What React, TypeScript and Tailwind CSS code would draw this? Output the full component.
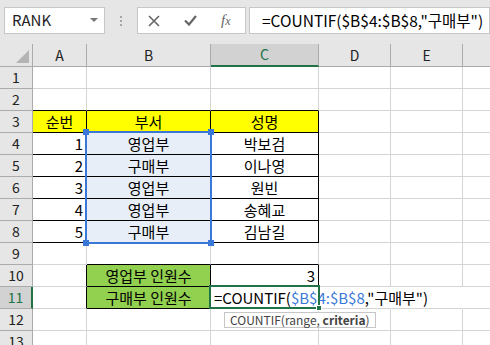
import type { ReactNode } from "react";

type Cell = {
  text?: ReactNode;
  align?: "l" | "c" | "r";
  fill?: "yellow" | "green" | "blue";
  br?: boolean; // black right edge
  bb?: boolean; // black bottom edge
  noR?: boolean; // gridline hidden under spilled text
};

const widths = ["w-[54px]", "w-[124px]", "w-[108px]", "w-[72px]", "w-[72px]", "w-[40px]"];
const letters = ["A", "B", "C", "D", "E", ""];

const Formula = () => (
  <>
    =COUNTIF(<span className="text-[#3a78d8]">$B$4:$B$8</span>,"구매부")
  </>
);

const rows: Record<number, Cell[]> = {
  2: [{ bb: true }, { bb: true }, { bb: true }],
  3: [
    { text: "순번", align: "c", fill: "yellow", br: true, bb: true },
    { text: "부서", align: "c", fill: "yellow", br: true, bb: true },
    { text: "성명", align: "c", fill: "yellow", br: true, bb: true },
  ],
  9: [{}, { bb: true }, { bb: true }],
  10: [
    { br: true },
    { text: "영업부 인원수", align: "c", fill: "green", br: true, bb: true },
    { text: "3", align: "r", br: true, bb: true },
  ],
  11: [
    { br: true },
    { text: "구매부 인원수", align: "c", fill: "green", br: true, bb: true },
    { text: <Formula />, align: "l", br: true, bb: true },
    { noR: true },
    { noR: true },
  ],
};

const people = [
  ["1", "영업부", "박보검"],
  ["2", "구매부", "이나영"],
  ["3", "영업부", "원빈"],
  ["4", "영업부", "송혜교"],
  ["5", "구매부", "김남길"],
];
people.forEach((p, i) => {
  rows[4 + i] = [
    { text: p[0], align: "r", br: true, bb: true },
    { text: p[1], align: "c", fill: "blue", br: true, bb: true },
    { text: p[2], align: "c", br: true, bb: true },
  ];
});

const fillClass = { yellow: "bg-[#ffff00]", green: "bg-[#92d050]", blue: "bg-[#e8eef8]" };
const alignClass = { l: "justify-start pl-[3px]", c: "justify-center", r: "justify-end pr-[3px]" };

function DataCell({ cell, w }: { cell: Cell; w: string }) {
  const right = cell.br ? "border-r-black" : cell.noR ? "border-r-transparent" : "border-r-[#d4d4d4]";
  const bottom = cell.bb ? "border-b-black" : "border-b-[#d4d4d4]";
  return (
    <div
      className={`${w} h-[22px] shrink-0 border-r border-b ${right} ${bottom} ${
        cell.fill ? fillClass[cell.fill] : ""
      } flex items-center ${alignClass[cell.align ?? "c"]} text-[15px] leading-none whitespace-nowrap relative z-10`}
    >
      {cell.text}
    </div>
  );
}

function Toolbar() {
  return (
    <div className="h-[44px] bg-[#e6e6e6] flex items-start pt-[7px] pl-[4px]">
      <div className="w-[101px] h-[27px] bg-white border border-[#c6c6c6] flex items-center pl-[7px] pr-[6px] justify-between">
        <span className="text-[15px] text-[#222]">RANK</span>
        <svg width="8" height="5" viewBox="0 0 8 5">
          <path d="M0 0h8L4 4z" fill="#777" />
        </svg>
      </div>
      <div className="w-[32px] h-[27px] flex flex-col items-center justify-center gap-[2px]">
        <span className="w-[2px] h-[2px] bg-[#a6a6a6]" />
        <span className="w-[2px] h-[2px] bg-[#a6a6a6]" />
        <span className="w-[2px] h-[2px] bg-[#a6a6a6]" />
      </div>
      <div className="w-[109px] h-[27px] bg-white border border-[#c6c6c6] flex items-center pl-[10px] gap-[24px]">
        <svg width="12" height="12" viewBox="0 0 12 12">
          <path d="M1 1l10 10M11 1L1 11" stroke="#666" strokeWidth="1.6" />
        </svg>
        <svg width="13" height="11" viewBox="0 0 13 11">
          <path d="M1 5.5l4 4L12 1" stroke="#666" strokeWidth="2.2" fill="none" />
        </svg>
        <span className="text-[15px] italic text-[#666] font-['Liberation_Serif',serif] leading-none">
          f<span className="text-[12px]">x</span>
        </span>
      </div>
      <div className="ml-[3px] flex-1 h-[27px] bg-white border border-[#c6c6c6] flex items-center pl-[12px] text-[15.5px] text-black whitespace-nowrap">
        =COUNTIF($B$4:$B$8,"구매부")
      </div>
    </div>
  );
}

export default function App() {
  return (
    <div className="w-[490px] h-[345px] overflow-hidden bg-white font-['Noto_Sans_CJK_KR',sans-serif] text-black">
      <Toolbar />
      <div className="relative">
        {/* column headers */}
        <div className="flex h-[23px]">
          <div className="w-[33px] shrink-0 border-r border-b border-[#ababab] bg-[#e6e6e6] flex items-end justify-end p-[3px]">
            <svg width="13" height="13" viewBox="0 0 13 13">
              <path d="M13 0V13H0z" fill="#b4b4b4" />
            </svg>
          </div>
          {letters.map((l, i) =>
            l === "C" ? (
              <div
                key={i}
                className={`${widths[i]} shrink-0 border-r border-[#ababab] border-b-2 border-b-[#217346] bg-[#d2d2d2] flex items-center justify-center text-[14px] text-[#217346]`}
              >
                {l}
              </div>
            ) : (
              <div
                key={i}
                className={`${widths[i]} shrink-0 border-r border-b border-[#ababab] bg-[#e6e6e6] flex items-center justify-center text-[14px] text-[#222]`}
              >
                {l}
              </div>
            )
          )}
        </div>
        {Array.from({ length: 13 }, (_, r) => r + 1).map((n) => {
          const cells = rows[n] ?? [];
          return (
            <div key={n} className="flex">
              {n === 11 ? (
                <div className="w-[33px] h-[22px] shrink-0 border-b border-[#ababab] border-r-2 border-r-[#217346] bg-[#d2d2d2] flex items-center justify-center text-[14px] text-[#217346]">
                  {n}
                </div>
              ) : (
                <div className="w-[33px] h-[22px] shrink-0 border-r border-b border-[#ababab] bg-[#e6e6e6] flex items-center justify-center text-[14px] text-[#222]">
                  {n}
                </div>
              )}
              {widths.map((w, i) => (
                <DataCell key={i} w={w} cell={cells[i] ?? {}} />
              ))}
            </div>
          );
        })}

        {/* reference highlight B4:B8 */}
        <div className="absolute left-[85px] top-[87px] w-[127px] h-[113px] border-2 border-[#3a78d8] z-20 pointer-events-none">
          <span className="absolute -left-[4px] -top-[4px] w-[6px] h-[6px] bg-[#3a78d8]" />
          <span className="absolute -right-[4px] -top-[4px] w-[6px] h-[6px] bg-[#3a78d8]" />
          <span className="absolute -left-[4px] -bottom-[4px] w-[6px] h-[6px] bg-[#3a78d8]" />
          <span className="absolute -right-[4px] -bottom-[4px] w-[6px] h-[6px] bg-[#3a78d8]" />
        </div>

        {/* active cell C11 */}
        <div className="absolute left-[209px] top-[241px] w-[111px] h-[24px] border-2 border-[#217346] z-20 pointer-events-none">
          <span className="absolute -right-[4px] -bottom-[4px] w-[6px] h-[6px] bg-[#217346] border border-white" />
        </div>

        {/* function tooltip */}
        <div className="absolute left-[224px] top-[268px] h-[16px] px-[5px] bg-white border border-[#c6c6c6] z-30 flex items-center text-[12px] text-[#444] whitespace-nowrap leading-none">
          COUNTIF(range, <span className="font-bold">&nbsp;criteria</span>)
        </div>
      </div>
    </div>
  );
}
